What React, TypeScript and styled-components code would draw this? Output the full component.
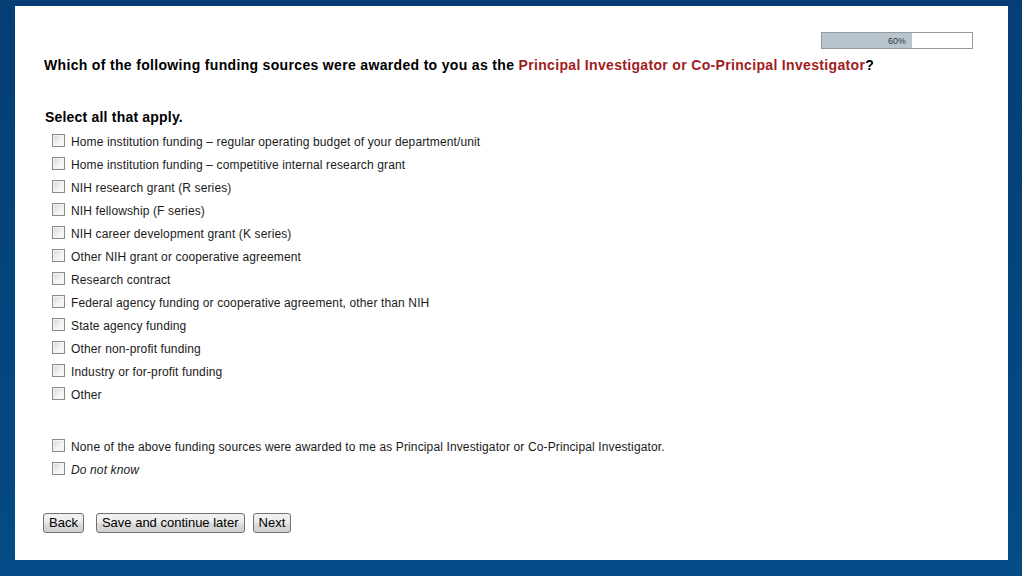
import React from "react";
import styled, { createGlobalStyle } from "styled-components";

const Global = createGlobalStyle`
  html, body { margin: 0; padding: 0; }
  body {
    width: 1022px;
    height: 576px;
    overflow: hidden;
    background: linear-gradient(to bottom, #043e74 0%, #044b87 100%);
    font-family: "Liberation Sans", Arial, sans-serif;
  }
`;

const Frame = styled.div`
  box-sizing: border-box;
  width: 1022px;
  height: 576px;
  padding: 6px 14px 16px 15px;
`;

const Panel = styled.main`
  box-sizing: border-box;
  background: #fff;
  height: 554px;
  padding: 26px 35px 0 29px;
  display: flex;
  flex-direction: column;
`;

const ProgressRow = styled.div`
  display: flex;
  justify-content: flex-end;
`;

const Progress = styled.div`
  box-sizing: border-box;
  width: 152px;
  height: 17px;
  border: 1px solid #999;
  background: #fff;
  display: flex;
`;

const ProgressFill = styled.div`
  background: #b8c5ce;
  height: 100%;
  display: flex;
  align-items: center;
  justify-content: flex-end;
  padding-right: 6px;
  box-sizing: border-box;
  font-size: 9px;
  color: #333;
`;

const Question = styled.h1`
  margin: 8px 0 0 0;
  font-size: 14px;
  font-weight: bold;
  line-height: 16px;
  color: #000;
  letter-spacing: 0.33px;
`;

const Accent = styled.span`
  color: #a01c22;
`;

const Instruction = styled.h2`
  margin: 36px 0 0 1px;
  font-size: 14px;
  font-weight: bold;
  line-height: 16px;
  color: #000;
  letter-spacing: 0.2px;
`;

const OptionList = styled.div<{ $gap?: number }>`
  display: flex;
  flex-direction: column;
  margin-top: ${(p) => p.$gap ?? 0}px;
`;

const Option = styled.label`
  display: flex;
  align-items: center;
  height: 23px;
  padding-left: 8px;
  font-size: 12px;
  letter-spacing: 0.13px;
  color: #1a1a1a;
`;

const Box = styled.span`
  box-sizing: border-box;
  width: 13px;
  height: 13px;
  border: 1px solid #8a8a8a;
  background: linear-gradient(135deg, #d4d4d4 0%, #f2f2f2 55%, #ffffff 100%);
  box-shadow: inset 0 0 0 1px #f4f4f4;
  margin-right: 6px;
  margin-top: -3px;
  flex-shrink: 0;
`;

const OptionText = styled.span<{ $italic?: boolean }>`
  font-style: ${(p) => (p.$italic ? "italic" : "normal")};
`;

const ButtonRow = styled.div`
  display: flex;
  gap: 12px;
  margin-top: 32px;
  margin-left: -1px;
`;

const Button = styled.button<{ $gapLeft?: number }>`
  box-sizing: border-box;
  height: 20px;
  padding: 0 5px;
  font-family: "Liberation Sans", Arial, sans-serif;
  font-size: 13px;
  color: #000;
  border: 1px solid #707070;
  border-radius: 3px;
  background: linear-gradient(to bottom, #f2f2f2 0%, #ebebeb 50%, #dddddd 51%, #cfcfcf 100%);
  line-height: 18px;
  margin-left: ${(p) => p.$gapLeft ?? 0}px;
`;

const options = [
  "Home institution funding \u2013 regular operating budget of your department/unit",
  "Home institution funding \u2013 competitive internal research grant",
  "NIH research grant (R series)",
  "NIH fellowship (F series)",
  "NIH career development grant (K series)",
  "Other NIH grant or cooperative agreement",
  "Research contract",
  "Federal agency funding or cooperative agreement, other than NIH",
  "State agency funding",
  "Other non-profit funding",
  "Industry or for-profit funding",
  "Other",
];

export default function App() {
  return (
    <>
      <Global />
      <Frame>
        <Panel>
          <ProgressRow>
            <Progress>
              <ProgressFill style={{ width: "60%" }}>60%</ProgressFill>
            </Progress>
          </ProgressRow>
          <Question>
            Which of the following funding sources were awarded to you as the{" "}
            <Accent>Principal Investigator or Co-Principal Investigator</Accent>?
          </Question>
          <Instruction>Select all that apply.</Instruction>
          <OptionList $gap={5}>
            {options.map((o) => (
              <Option key={o}>
                <Box />
                <OptionText>{o}</OptionText>
              </Option>
            ))}
          </OptionList>
          <OptionList $gap={29}>
            <Option>
              <Box />
              <OptionText>
                None of the above funding sources were awarded to me as Principal Investigator or Co-Principal Investigator.
              </OptionText>
            </Option>
            <Option>
              <Box />
              <OptionText $italic>Do not know</OptionText>
            </Option>
          </OptionList>
          <ButtonRow>
            <Button>Back</Button>
            <Button>Save and continue later</Button>
            <Button $gapLeft={-4}>Next</Button>
          </ButtonRow>
        </Panel>
      </Frame>
    </>
  );
}
